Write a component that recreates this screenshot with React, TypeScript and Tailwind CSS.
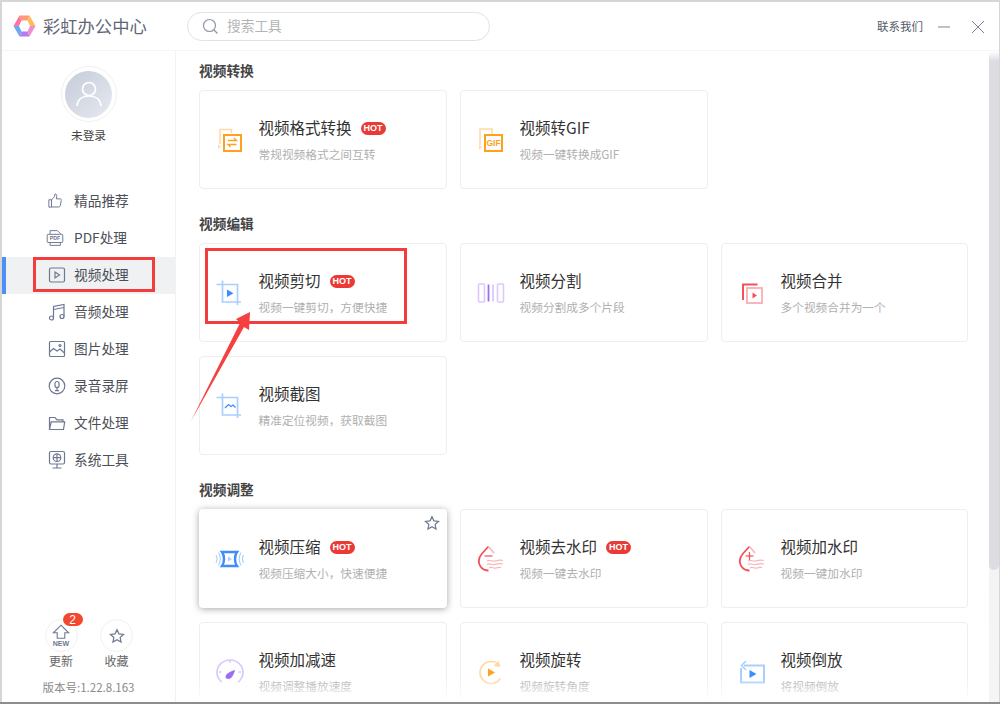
import React from "react";

const S = "#6d7891";
const navIcon = { width: 22, height: 22, viewBox: "0 0 22 22", fill: "none", stroke: S, strokeWidth: 1 } as const;

const Thumb = () => (
  <svg {...navIcon} width={18} height={18} strokeWidth={1.200}><path d="M3.500 9.500h3.200v9H3.500zM6.700 9.700l3.600-3.900.6-3.300c1.600-.3 2.400 1 2.200 2.600l-.5 3.300h4.700c1 0 1.600.8 1.400 1.800l-1.300 6.600c-.2.900-.8 1.500-1.700 1.500H6.700" /></svg>
);
const Pdf = () => (
  <svg {...navIcon} width={18} height={18} strokeWidth={1.200}><path d="M5 6V2h9l3.500 3.500V6M5 17v3h12.500v-3" /><rect x="1.500" y="6.500" width="19" height="10" rx="1" /><text x="11" y="14" fontSize="6.500" fontWeight="700" fill={S} stroke="none" textAnchor="middle" fontFamily="Liberation Sans">PDF</text></svg>
);
const Play = () => (
  <svg {...navIcon} strokeWidth={1.2}><rect x="3.500" y="4" width="15" height="14" rx="1.500" /><path d="M9 8l4.500 3L9 14z" /></svg>
);
const Music = () => (
  <svg {...navIcon} strokeWidth={1.2}><path d="M7.500 17V5.500L18 3.500v12M7.500 8.500L18 6.500" /><circle cx="5.500" cy="17" r="2" /><circle cx="16" cy="15.500" r="2" /></svg>
);
const Pic = () => (
  <svg {...navIcon} strokeWidth={1.2}><rect x="3.500" y="3.500" width="15" height="15" rx="1" /><path d="M3.500 14l4-3.500 3.500 2.500 3-2 4.500 4" /><circle cx="14" cy="7.500" r="1" /></svg>
);
const Rec = () => (
  <svg {...navIcon} strokeWidth={1.2}><circle cx="11" cy="11" r="7.800" /><rect x="9" y="6.500" width="4" height="6" rx="2" /><path d="M11 12.500v3.200M9 15.700h4" /></svg>
);
const Folder = () => (
  <svg {...navIcon} strokeWidth={1.2}><path d="M3.500 17.500v-12h5.500l2 2.300h6v2M3.500 17.500h14l1.200-7.700H5.200z" /></svg>
);
const Sys = () => (
  <svg {...navIcon} strokeWidth={1.2}><rect x="3.500" y="2.500" width="15" height="12.500" rx="1.500" /><circle cx="11" cy="8.700" r="3.800" /><path d="M7.300 8.700h7.400M11 5v7.400M11 15v3.500M6.500 19h9" /></svg>
);

const O = "#ffa11f";
const OL = "#ffd9a3";
const B = "#3f8cff";
const BL = "#a9cfff";
const P = "#9d6cf0";
const PL = "#dcc8fb";
const R = "#f0525a";
const RL = "#f9b6ba";

const I = ({ children }: { children: React.ReactNode }) => (
  <svg width="30" height="30" viewBox="0 0 30 30" fill="none" className="shrink-0">{children}</svg>
);

const IFormat = () => (
  <I>
    <path d="M5 19V4.500h11.500V8M5 19V4.500" stroke={OL} strokeWidth="1.500" />
    <path d="M3 19.500l3 2-3 2.500z" fill={OL} />
    <rect x="9" y="10" width="17" height="16" stroke={O} strokeWidth="2" />
    <path d="M13 15.500h8.500l-2.500-2.500M21.500 19.500H13l2.500 2.500" stroke={O} strokeWidth="1.300" />
  </I>
);
const IGif = () => (
  <I>
    <path d="M4 20V4h12v5" stroke={OL} strokeWidth="1.500" />
    <path d="M3 20l3 2-3 2.500z" fill={OL} />
    <rect x="9" y="10" width="17" height="16" fill="#fff" stroke={O} strokeWidth="2" />
    <text x="17.500" y="21" fontSize="8.500" fontWeight="700" fill={O} textAnchor="middle" fontFamily="Liberation Sans">GIF</text>
  </I>
);
const ICut = () => (
  <I>
    <path d="M1.500 5.500H22.500V26M7.500 1.500V23H26" stroke={BL} strokeWidth="1.700" transform="translate(0 1)" />
    <path d="M12 11.500l6.500 3.700-6.500 3.700z" fill={B} />
  </I>
);
const ISplit = () => (
  <I>
    <rect x="2.500" y="6" width="6" height="18" rx="1" stroke={PL} strokeWidth="1.600" />
    <rect x="21.500" y="6" width="6" height="18" rx="1" stroke={PL} strokeWidth="1.600" />
    <path d="M12.500 6.500v17" stroke={P} strokeWidth="1.800" />
    <path d="M17 6.500v17" stroke={PL} strokeWidth="1.800" />
  </I>
);
const IMerge = () => (
  <I>
    <path d="M6 22V6.500h14.500" stroke={R} strokeWidth="2" />
    <rect x="10" y="10" width="15" height="15" fill="#fff" stroke={RL} strokeWidth="2" />
    <path d="M15.500 14.500l4.500 3-4.500 3z" fill={R} />
  </I>
);
const IShot = () => (
  <I>
    <path d="M1.500 5.500H22.500V26M7.500 1.500V23H26" stroke={BL} strokeWidth="1.700" transform="translate(0 1)" />
    <path d="M10 17l3.500-3.500 2.500 2 2-1.500 2.500 2.500" stroke={B} strokeWidth="1.300" />
  </I>
);
const ICompress = () => (
  <I>
    <path d="M7 8h15c-1.500 2-2 4.500-2 7s.5 5 2 7H7c1.500-2 2-4.500 2-7s-.5-5-2-7z" stroke={B} strokeWidth="2.400" />
    <path d="M3.500 8.500c2.200 4 2.200 9 0 13M26 8.500c-2.200 4-2.200 9 0 13M1 11c1.300 2.500 1.300 5.500 0 8M28.500 11c-1.300 2.500-1.300 5.500 0 8" stroke={BL} strokeWidth="1.100" />
    <path d="M13 12.500l4 2.500-4 2.500z" fill={BL} />
  </I>
);
const IDrop = ({ plus }: { plus?: boolean }) => (
  <I>
    <path d="M12.500 2.500L6 9.500C2.500 13.500 2 18.500 4.500 22.500c2 3 5 4 8 4" stroke={R} strokeWidth="1.800" />
    <path d="M12.500 2.500l5.500 6.500" stroke={RL} strokeWidth="1.600" />
    <path d="M8.500 12h8" stroke={R} strokeWidth="1.200" />
    {plus && <path d="M12.500 8v8" stroke={R} strokeWidth="1.200" />}
    <path d="M11 17c3-1.800 5 1 8 0s4-1.500 8-.5M11 20.500c3-1.800 5 1 8 0s4-1.500 8-.5M13 24c3-1.800 4 1 7 0s3-1 5-.5" stroke={RL} strokeWidth="1.200" />
  </I>
);
const ISpeed = () => (
  <I>
    <path d="M7 25C3.500 22.500 2 19 2 15.500 2 8.500 7.800 3 15 3s13 5.500 13 12.500c0 3.500-1.500 7-5 9.500" stroke={PL} strokeWidth="1.700" />
    <path d="M15 3v3M4 15h2.500M26 15h-2.500" stroke={PL} strokeWidth="1.400" />
    <path d="M10.500 20c0-3 4.500-5.500 9.500-7-1 4.500-3.500 9-6.500 9-1.800 0-3-1-3-2z" fill={P} />
  </I>
);
const IRotate = () => (
  <I>
    <path d="M24 9c-2-3-5-4.500-9-4.500C9 4.500 4 9.500 4 15.500S9 26.500 15 26.500c4 0 7.500-2 9-5" stroke={OL} strokeWidth="1.700" />
    <path d="M23 3.500l.5 6.500-6 -1z" fill={OL} />
    <path d="M12 11.500l7 4-7 4z" fill={O} />
  </I>
);
const IReverse = () => (
  <I>
    <path d="M7 8.500h20v17H4V11" stroke={BL} strokeWidth="2" />
    <path d="M9 4L4.500 8.500 9 13" stroke={BL} strokeWidth="1.600" />
    <path d="M12.500 13l7 4-7 4z" fill={B} />
  </I>
);

const nav: [string, React.ReactNode][] = [
  ["精品推荐", <Thumb />],
  ["PDF处理", <Pdf />],
  ["视频处理", <Play />],
  ["音频处理", <Music />],
  ["图片处理", <Pic />],
  ["录音录屏", <Rec />],
  ["文件处理", <Folder />],
  ["系统工具", <Sys />],
];

type Tool = { t: string; d: string; i: React.ReactNode; hot?: boolean; hover?: boolean };

const Hot = () => (
  <span className="ml-[9px] mt-[2px] flex h-[13px] w-[25px] items-center justify-center rounded-full bg-[#ea3a35] text-[9px] leading-none font-bold text-white font-['Liberation_Sans',sans-serif]">HOT</span>
);

const Card = ({ t, d, i, hot, hover }: Tool) => (
  <div className={`relative flex h-[99px] items-center rounded-[4px] bg-white pl-[15px] ${hover ? "border border-transparent shadow-[0_1px_7px_rgba(0,0,0,0.35)]" : "border border-[#eeeeee]"}`}>
    <div className="mt-[1px] flex w-[43.5px] shrink-0">{i}</div>
    <div className="flex flex-col">
      <div className="flex h-[22px] items-center pb-[2px]">
        <span className="text-[15.5px] leading-none text-[#333333]">{t}</span>
        {hot && <Hot />}
      </div>
      <span className="mt-[6px] text-[11.700px] leading-[16px] text-[#b0b0b0]">{d}</span>
    </div>
    {hover && (
      <svg width="16" height="16" viewBox="0 0 24 24" fill="none" stroke={S} strokeWidth="1.800" className="absolute right-[6px] top-[5px]">
        <path d="M12 2.500l2.900 6.300 6.900.8-5.100 4.700 1.400 6.800L12 17.700l-6.100 3.400 1.400-6.800L2.200 9.600l6.900-.8z" />
      </svg>
    )}
  </div>
);

const Section = ({ title, items, mt }: { title: string; items: Tool[]; mt: string }) => (
  <section className={mt}>
    <h2 className="h-[20px] text-[13.700px] leading-[20px] font-bold text-[#444444]">{title}</h2>
    <div className="mt-[10px] grid grid-cols-[248px_248px_247px] gap-x-[13px] gap-y-[14px]">
      {items.map((x) => <Card key={x.t} {...x} />)}
    </div>
  </section>
);

const Logo = () => {
  const c = ["#ff9a78", "#ffbb5c", "#ee8fce", "#b67aec", "#6fa8f2", "#ff74a0"];
  const o = [[6.500, 0.5], [16.500, 0.5], [22.500, 11], [16.500, 21.500], [6.500, 21.500], [0.5, 11]];
  const n = [[8.500, 5.500], [14.500, 5.500], [17, 11], [14.500, 16.500], [8.500, 16.500], [6, 11]];
  return (
    <svg width="23" height="22" viewBox="0 0 23 22">
      {o.map((p, i) => {
        const q = o[(i + 1) % 6];
        const a = n[i];
        const b = n[(i + 1) % 6];
        return <polygon key={i} points={`${p[0]},${p[1]} ${q[0]},${q[1]} ${b[0]},${b[1]} ${a[0]},${a[1]}`} fill={c[i]} />;
      })}
    </svg>
  );
};

export default function App() {
  return (
    <div className="relative h-[704px] w-[1000px] overflow-hidden bg-[#d6d6d6] pl-[2px] pr-[1px] pt-[2px] border-b-2 border-[#8d8d8d] font-['Noto_Sans_CJK_SC','Liberation_Sans',sans-serif]">
      <div className="flex h-[700px] flex-col bg-white">
        <header className="flex h-[49px] shrink-0 items-center border-b border-[#f5f5f5]">
          <div className="ml-[11px] flex w-[174px] items-center">
            <Logo />
            <span className="ml-[7px] text-[17.300px] leading-none text-[#5f6675]">彩虹办公中心</span>
          </div>
          <div className="flex h-[29px] w-[303px] items-center rounded-full border border-[#e2e2e2] pl-[14px]">
            <svg width="17" height="17" viewBox="0 0 17 17" fill="none" stroke="#8f98a8" strokeWidth="1.200">
              <circle cx="7.500" cy="7.500" r="6" />
              <path d="M12 12l3.500 3.500" />
            </svg>
            <span className="ml-[8px] text-[13.700px] leading-none text-[#b4b4b4]">搜索工具</span>
          </div>
          <span className="ml-[387px] mt-[2px] text-[11.500px] leading-none text-[#555c6b]">联系我们</span>
          <svg width="12" height="2" viewBox="0 0 12 2" className="ml-[15px] mt-[2px]"><path d="M0 1h12" stroke="#7b8494" strokeWidth="1" /></svg>
          <svg width="14" height="14" viewBox="0 0 14 14" className="ml-[21px] mt-[1px]" fill="none" stroke="#7b8494" strokeWidth="1"><path d="M1 1l12 12M13 1L1 13" /></svg>
        </header>
        <div className="flex min-h-0 flex-1">
          <aside className="flex w-[174px] shrink-0 flex-col items-stretch border-r border-[#f2f2f2]">
            <div className="mt-[15px] flex flex-col items-center">
              <div className="flex h-[56px] w-[56px] items-center justify-center rounded-full border border-[#f0f0f0]">
                <div className="flex h-[47px] w-[47px] items-center justify-center rounded-full bg-gradient-to-br from-[#c5ccd9] to-[#e6e9f0]">
                  <svg width="30" height="30" viewBox="0 0 30 30" fill="none" stroke="#fff" strokeWidth="1.700">
                    <circle cx="15" cy="10" r="6.500" />
                    <path d="M3 27c.5-6 5-10 12-10s11.500 4 12 10" />
                  </svg>
                </div>
              </div>
              <span className="mt-[3px] text-[11.700px] leading-[20px] text-[#444444]">未登录</span>
            </div>
            <nav className="mt-[38px] flex flex-col">
              {nav.map(([t, ic], idx) => (
                <div key={t} className={`flex h-[37px] items-center pb-[2px] pl-[44px] ${idx === 2 ? "relative bg-[#eff1f3]" : ""}`}>
                  {idx === 2 && <span className="absolute left-0 top-0 h-full w-[4px] bg-[#4a90f7]" />}
                  <span className="flex w-[28px] shrink-0">{ic}</span>
                  <span className="text-[13.700px] leading-none text-[#4c4f57]">{t}</span>
                </div>
              ))}
            </nav>
            <div className="mt-auto flex flex-col items-center pb-[7px]">
              <div className="flex">
                <div className="relative flex w-[55px] flex-col items-center">
                  <div className="flex h-[33px] w-[33px] items-center justify-center rounded-full border border-[#f0f0f0]">
                    <svg width="24" height="26" viewBox="0 0 22 24" fill="none" stroke={S} strokeWidth="1">
                      <path d="M11 2l7 7h-3.500v5h-7V9H4z" />
                      <text x="11" y="21.500" fontSize="6.500" fontWeight="700" fill={S} stroke="none" textAnchor="middle" fontFamily="Liberation Sans">NEW</text>
                    </svg>
                  </div>
                  <span className="absolute right-[6px] top-[-6px] flex h-[13px] w-[20px] items-center justify-center rounded-full bg-[#f4472f] text-[12px] leading-none text-white font-['Liberation_Sans',sans-serif]">2</span>
                  <span className="mt-[1px] text-[12px] leading-[16px] text-[#666666]">更新</span>
                </div>
                <div className="flex w-[55px] flex-col items-center border-l border-transparent">
                  <div className="flex h-[33px] w-[33px] items-center justify-center rounded-full border border-[#f0f0f0]">
                    <svg width="16" height="16" viewBox="0 0 24 24" fill="none" stroke={S} strokeWidth="1.800">
                      <path d="M12 2.500l2.900 6.300 6.900.8-5.100 4.700 1.400 6.800L12 17.700l-6.100 3.400 1.400-6.800L2.200 9.600l6.900-.8z" />
                    </svg>
                  </div>
                  <span className="mt-[1px] text-[12px] leading-[16px] text-[#666666]">收藏</span>
                </div>
              </div>
              <span className="mt-[10px] text-[11.500px] leading-[16px] text-[#8a8a8a]">版本号:1.22.8.163</span>
            </div>
          </aside>
          <main className="relative min-w-0 flex-1 overflow-hidden pl-[23px] pt-[9px]">
            <Section
              title="视频转换"
              mt=""
              items={[
                { t: "视频格式转换", d: "常规视频格式之间互转", i: <IFormat />, hot: true },
                { t: "视频转GIF", d: "视频一键转换成GIF", i: <IGif /> },
              ]}
            />
            <Section
              title="视频编辑"
              mt="mt-[24px]"
              items={[
                { t: "视频剪切", d: "视频一键剪切，方便快捷", i: <ICut />, hot: true },
                { t: "视频分割", d: "视频分割成多个片段", i: <ISplit /> },
                { t: "视频合并", d: "多个视频合并为一个", i: <IMerge /> },
                { t: "视频截图", d: "精准定位视频，获取截图", i: <IShot /> },
              ]}
            />
            <Section
              title="视频调整"
              mt="mt-[24px]"
              items={[
                { t: "视频压缩", d: "视频压缩大小，快速便捷", i: <ICompress />, hot: true, hover: true },
                { t: "视频去水印", d: "视频一键去水印", i: <IDrop />, hot: true },
                { t: "视频加水印", d: "视频一键加水印", i: <IDrop plus /> },
                { t: "视频加减速", d: "视频调整播放速度", i: <ISpeed /> },
                { t: "视频旋转", d: "视频旋转角度", i: <IRotate /> },
                { t: "视频倒放", d: "将视频倒放", i: <IReverse /> },
              ]}
            />
            <div className="absolute inset-x-0 bottom-0 h-[24px] bg-gradient-to-b from-transparent to-white" />
            <div className="absolute bottom-0 right-0 top-0 w-[10px] bg-gradient-to-b from-white from-0% via-[#eeeeee] via-3% to-[#f5f5f5]">
              <div className="h-[519px] rounded-b-[5px] bg-gradient-to-b from-white to-[#dcdde2] to-[2%]" />
            </div>
          </main>
        </div>
      </div>
      {/* Annotation overlays */}
      <div className="absolute left-[33px] top-[257px] h-[35px] w-[122px] border-[3px] border-[#f33c3c]" />
      <div className="absolute left-[205px] top-[248px] h-[76px] w-[202px] border-[3px] border-[#f33c3c]" />
      <svg className="absolute left-0 top-0" width="1000" height="704" viewBox="0 0 1000 704">
        <polygon points="250,312 236,319 240,323 191,421 244,327 249,330" fill="#f4403f" />
      </svg>
    </div>
  );
}
